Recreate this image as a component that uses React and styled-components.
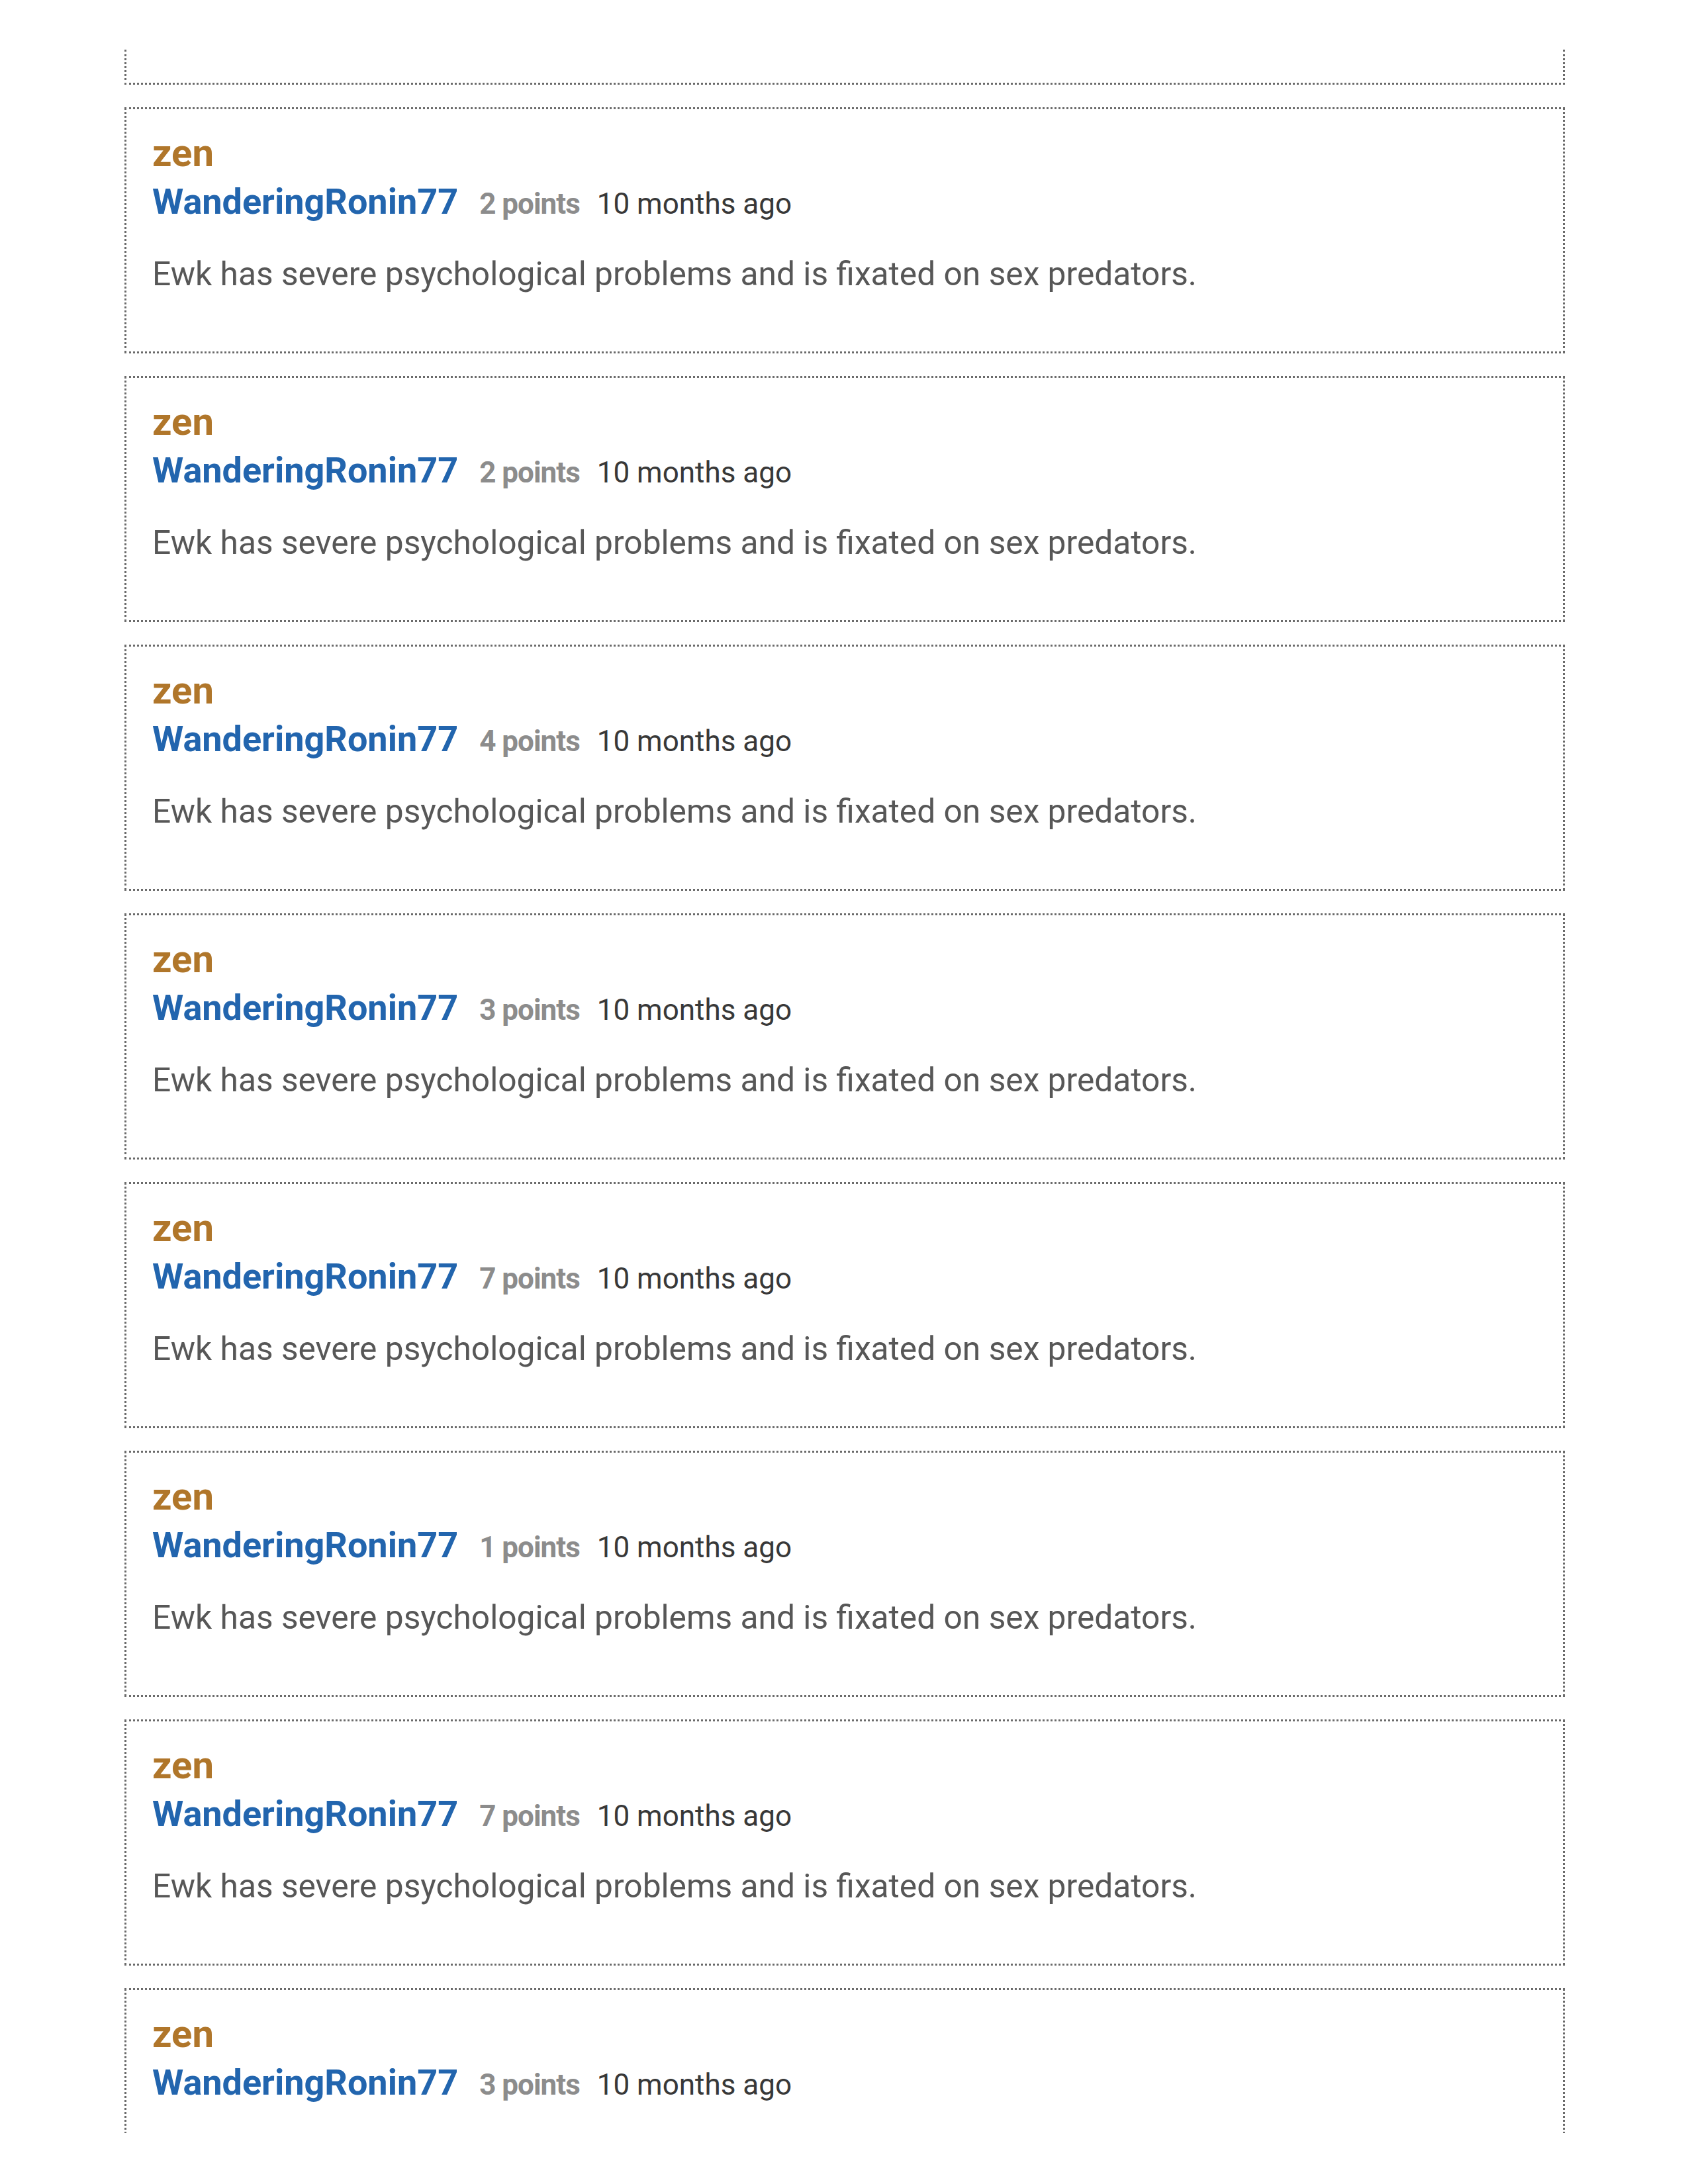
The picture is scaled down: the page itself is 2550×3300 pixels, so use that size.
import React from 'react'
import styled, { createGlobalStyle } from 'styled-components'

const GlobalStyle = createGlobalStyle`
  body {
    margin: 0;
    background: #fff;
    font-family: Roboto, 'Liberation Sans', sans-serif;
  }
`

const Page = styled.div`
  width: 2550px;
  height: 3300px;
  background: #fff;
  padding-top: 75px;
  box-sizing: border-box;
`

// printed page area, the list runs past both edges
const Sheet = styled.div`
  height: 3148px;
  overflow: hidden;
`

const List = styled.div`
  display: flex;
  flex-direction: column;
  gap: 34px;
  width: 2176px;
  margin: 0 0 0 188px;
`

const Card = styled.div`
  box-sizing: border-box;
  height: ${p => (p.$tail ? '53px' : '372px')};
  border: 3px dotted #6b6b6b;
  border-top: ${p => (p.$tail ? 'none' : '3px dotted #6b6b6b')};
  padding: 31px 39px 0 39px;
`

const Topic = styled.div`
  font-size: 58px;
  line-height: 70px;
  font-weight: 700;
  color: #b0762a;
`

const Meta = styled.div`
  display: flex;
  align-items: baseline;
  margin-top: 3px;
  height: 72px;
`

const User = styled.span`
  font-size: 54px;
  line-height: 72px;
  font-weight: 700;
  color: #2265ae;
`

const Points = styled.span`
  margin-left: 32px;
  font-size: 44px;
  font-weight: 700;
  letter-spacing: -1px;
  color: #8c8c8c;
`

const Time = styled.span`
  margin-left: 26px;
  font-size: 44px;
  color: #383838;
`

const Body = styled.p`
  margin: 43px 0 0 0;
  font-size: 49.7px;
  line-height: 60px;
  color: #575757;
`

const comments = [2, 2, 4, 3, 7, 1, 7, 3]

const Comment = ({ points }) => (
  <Card>
    <Topic>zen</Topic>
    <Meta>
      <User>WanderingRonin77</User>
      <Points>{points} points</Points>
      <Time>10 months ago</Time>
    </Meta>
    <Body>Ewk has severe psychological problems and is fixated on sex predators.</Body>
  </Card>
)

const App = () => (
  <Page>
    <GlobalStyle />
    <Sheet>
      <List>
        <Card $tail />
        {comments.map((p, i) => (
          <Comment key={i} points={p} />
        ))}
      </List>
    </Sheet>
  </Page>
)

export default App
